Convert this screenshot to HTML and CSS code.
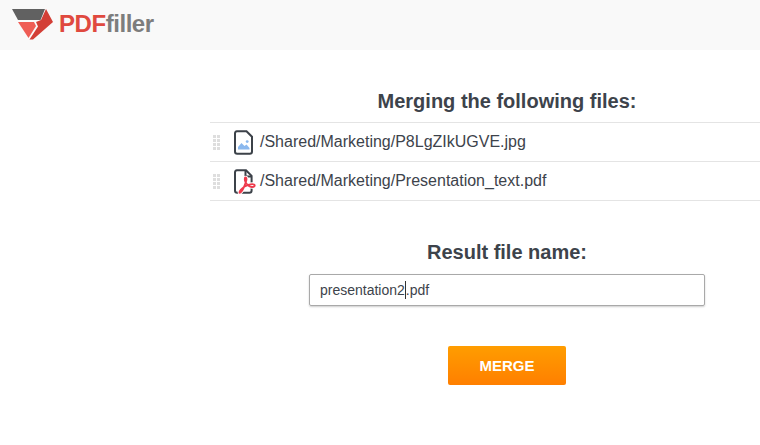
FILE: index.html
```html
<!DOCTYPE html>
<html lang="en">
<head>
    <meta charset="UTF-8">
    <meta name="viewport" content="width=device-width, initial-scale=1.0">
    <title>PDFfiller Merge</title>
    <link rel="stylesheet" href="styles.css">
</head>
<body>
    <header class="top-bar">
        <svg class="logo-mark" width="41" height="31" viewBox="0 0 41 31">
            <polygon points="0,0 33,0 28.5,11 6,11" fill="#616161"/>
            <polygon points="6,13 22,13 24,17 16.5,29" fill="#ef5d55"/>
            <polygon points="34,0 41,13 21,30.5 17.5,30.5 26,17.5 24,13 29,11" fill="#d33f36"/>
        </svg>
        <span class="logo-text"><span class="logo-pdf">PDF</span><span class="logo-filler">filler</span></span>
    </header>

    <main class="content">
        <h2 class="heading first-heading">Merging the following files:</h2>
        <ul class="file-list">
            <li class="file-row">
                <span class="grip"></span>
                <svg class="file-icon" width="20" height="25" viewBox="0 0 20 25">
                    <path d="M3 1.2H12.5L18 6.7V21.5a2.2 2.2 0 0 1-2.2 2.2H3.2A2.2 2.2 0 0 1 1 21.5V3.4A2.2 2.2 0 0 1 3 1.2Z" fill="#fff" stroke="#3c4249" stroke-width="2"/>
                    <circle cx="13.2" cy="11.6" r="1.4" fill="#8ab8ee"/>
                    <path d="M4 19.5V17L7.5 13L10.5 16L12.5 14.5L15.5 18V19.5Z" fill="#8ab8ee"/>
                </svg>
                <span class="file-path">/Shared/Marketing/P8LgZIkUGVE.jpg</span>
            </li>
            <li class="file-row">
                <span class="grip"></span>
                <svg class="file-icon" width="20" height="25" viewBox="0 0 20 25">
                    <path d="M3 1.2H12L17.6 6.8V21.5a2.2 2.2 0 0 1-2.2 2.2H3.2A2.2 2.2 0 0 1 1 21.5V3.4A2.2 2.2 0 0 1 3 1.2Z" fill="#fff" stroke="#3c4249" stroke-width="2"/>
                    <path d="M11.5 1.5V7.5H17.5" fill="none" stroke="#3c4249" stroke-width="2"/>
                    <path d="M11.5 8.5C10.5 8.5 10.5 11 11.5 13C12.5 15.5 15.5 18 18 18C20.5 18 21.5 16.5 20 15.5C18 14.5 11 16 7 20.5C5 23 5 24.5 6.5 23.5C9 22 12.5 12 12.5 10C12.5 9 12 8.5 11.5 8.5Z" fill="none" stroke="#fff" stroke-width="3.6"/>
                    <path d="M11.5 8.5C10.5 8.5 10.5 11 11.5 13C12.5 15.5 15.5 18 18 18C20.5 18 21.5 16.5 20 15.5C18 14.5 11 16 7 20.5C5 23 5 24.5 6.5 23.5C9 22 12.5 12 12.5 10C12.5 9 12 8.5 11.5 8.5Z" fill="none" stroke="#ee3a4c" stroke-width="1.8" stroke-linejoin="round"/>
                </svg>
                <span class="file-path">/Shared/Marketing/Presentation_text.pdf</span>
            </li>
        </ul>

        <h2 class="heading result-heading">Result file name:</h2>
        <div class="name-input"><span>presentation2</span><span class="caret"></span><span>.pdf</span></div>
        <button class="merge-btn">MERGE</button>
    </main>
</body>
</html>
```

FILE: styles.css
```css
body {
    font-family: "Liberation Sans", Arial, sans-serif;
    margin: 0;
    background-color: #fff;
    color: #3d434b;
}
.top-bar {
    display: flex;
    align-items: center;
    height: 50px;
    padding-left: 12px;
    box-sizing: border-box;
    background-color: #f9f9f9;
}
.logo-mark {
    margin-top: -1px;
}
.logo-text {
    margin-left: 6px;
    margin-top: -2px;
    font-size: 24px;
    font-weight: bold;
    letter-spacing: -0.45px;
}
.logo-pdf {
    color: #e0493f;
}
.logo-filler {
    color: #7d7d7d;
}
.content {
    display: flex;
    flex-direction: column;
    align-items: center;
    margin-left: 210px;
    padding-left: 44px;
}
.heading {
    margin: 0;
    font-size: 20px;
    line-height: 24px;
    font-weight: bold;
    text-align: center;
}
.first-heading {
    margin-top: 39px;
    margin-bottom: 9px;
}
.file-list {
    align-self: stretch;
    margin: 0 0 0 -44px;
    padding: 0;
    list-style: none;
    border-top: 1px solid #e4e4e4;
}
.file-row {
    display: flex;
    align-items: center;
    height: 38px;
    border-bottom: 1px solid #e4e4e4;
}
.grip {
    width: 7px;
    height: 15px;
    margin-left: 3px;
    background-image: radial-gradient(circle at 1.5px 1.5px, #dedede 1.5px, transparent 1.7px);
    background-size: 4px 4px;
}
.file-icon {
    margin-left: 14px;
    margin-right: -1px;
    overflow: visible;
}
.file-path {
    margin-left: 7px;
    font-size: 16px;
}
.result-heading {
    margin-top: 39px;
    margin-bottom: 10px;
}
.name-input {
    display: flex;
    align-items: center;
    width: 396px;
    height: 32px;
    padding-left: 10px;
    box-sizing: border-box;
    border: 1px solid #a9a9a9;
    border-radius: 2px;
    box-shadow: 0 1px 2px rgba(0, 0, 0, 0.2);
    font-size: 14px;
}
.caret {
    width: 1px;
    height: 18px;
    background-color: #333;
}
.merge-btn {
    width: 118px;
    height: 39px;
    margin-top: 40px;
    border: none;
    border-radius: 2px;
    background: linear-gradient(#ff9d00, #ff7f00);
    color: #fff;
    font-family: inherit;
    font-size: 15px;
    font-weight: bold;
}
```
